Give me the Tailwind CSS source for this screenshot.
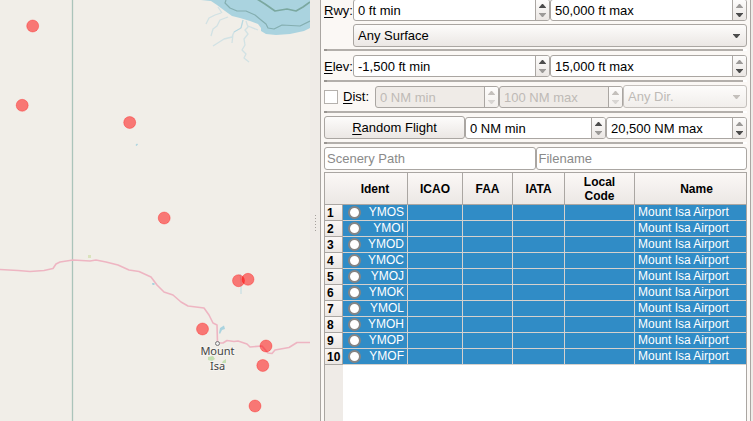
<!DOCTYPE html>
<html lang="en">
<head>
<meta charset="utf-8">
<title>Airports</title>
<script src="https://cdn.jsdelivr.net/npm/@tailwindcss/browser@4"></script>
</head>
<body class="bg-[#efebe7] font-['Liberation_Sans',Arial,sans-serif] text-[13px] leading-4 text-black">
<svg class="hidden" aria-hidden="true">
  <symbol id="up" viewBox="0 0 7 4"><path d="M0 4V3.500L3 0h1L7 3.500V4z" fill="currentColor"/></symbol>
  <symbol id="down" viewBox="0 0 7 4"><path d="M0 0h7v.5L4 4H3L0 .5z" fill="currentColor"/></symbol>
</svg>
<div class="flex h-screen overflow-hidden">
  <main class="min-w-0 flex-1 bg-[#f1eee8]">
    <svg class="block h-full w-full" viewBox="0 0 310 421" preserveAspectRatio="xMinYMin slice" role="img" aria-label="Map around Mount Isa">
      <rect width="310" height="421" fill="#f1eee8"/>
      <!-- sea and coast -->
      <path d="M201 0L211 1L217 5L225 11L232 16L240 18L250 21L258 24L261 28V31L266 34L276 35L290 34L304 31L310 28V0z" fill="#aad3df"/>
      <g fill="none" stroke-linejoin="round">
        <path d="M226 0L225 3L230 8L237 11L246 11L255 15L261 20L266 24L268 28L274 29L278 27L282 25L300 26L310 21" stroke="#84aeb0" stroke-width="1.2"/>
        <path d="M257 -1L265 4L275 11L287 9L296 11L303 7L310 2" stroke="#7ba8a0" stroke-width="1.7"/>
        <path d="M243 20L241 28L234 32L232 37L224 39L213 46M233 34L232 43M246 21L248 27L245 30L248 34L244 39L245 45L242 50L246 54L244 58L249 62M228 17L220 20L217 26L213 29L211 36M221 13L215 15L209 18L206 24M218 7L222 13M248 26L258 30" stroke="#aad3df" stroke-width="1.3" opacity=".45"/>
        <path d="M243 20L241 28L234 32M240 274L241 282V286L241 294" stroke="#aad3df" opacity=".7"/>
        <path d="M72.500 0V421" stroke="#abc4ba" stroke-width="1.3"/>
        <!-- highway -->
        <path d="M0 269.500L18 270.500L30 271.500L44 270.500L53 268.500L56 264L60 262L73 260L90 261L96 260L106 262L118 265L129 270L139 271.500L151 277L157 285L164 292L173 295L181 302L188 306L204 308L209 315L213 323L217 325L217.500 343L223 343L227 340.500L234 341.500L238 341L247 344L250 347L262 346L268 353L272 353.500L275 350L289 347.500L297 342.500L310 342.500" stroke="#eeb5c2" stroke-width="1.6"/>
      </g>
      <path d="M219 333L220 328L224 325.500L225 329L222 330L220 334z" fill="#aad3df"/>
      <path d="M135.500 145L137 143.500L138 144.500L136.500 146zM152 283h2.500v2h-2z" fill="#aad3df"/>
      <path d="M208 357l5-1 2 3-3 2-4-1zM223 361l3-2v4h-4z" fill="#c3dfb1"/>
      <path d="M88 255h3v3h-3z" fill="#dbe3bd"/>
      <circle cx="217.500" cy="343.500" r="2" fill="#eee" stroke="#777"/>
      <g class="font-['Noto_Sans',sans-serif] text-[11px]" text-anchor="middle" fill="#444" stroke="#f6f4ef" stroke-width="2" paint-order="stroke">
        <text x="217.500" y="355">Mount</text>
        <text x="217.500" y="370">Isa</text>
      </g>
      <g fill="#ff0000" fill-opacity=".5" stroke="#ff0000" stroke-opacity=".3">
        <circle cx="32.700" cy="26" r="6"/><circle cx="22.200" cy="105.300" r="6"/><circle cx="129.700" cy="122.500" r="6"/>
        <circle cx="164.200" cy="218" r="6"/><circle cx="238.500" cy="280.700" r="6"/><circle cx="248" cy="279.300" r="6"/>
        <circle cx="202.500" cy="329" r="6"/><circle cx="266" cy="346" r="6"/><circle cx="262.800" cy="365.500" r="6"/><circle cx="255" cy="406" r="6"/>
      </g>
    </svg>
  </main>

  <div class="flex w-[10px] shrink-0 items-center justify-center pt-[26px]">
    <div class="h-[17px] w-px bg-[repeating-linear-gradient(#a5a19d_0_1px,transparent_1px_3px)]"></div>
  </div>

  <aside class="mr-[2px] flex w-[431px] shrink-0 flex-col border-x border-[#aaa6a2] bg-[#fbf8f5] px-[3px]">
    <form class="-mt-[2px] flex flex-col gap-[3px]">
      <div class="flex h-[23px] items-end">
        <label for="rmin" class="w-[29px] pb-[2px]"><span class="underline underline-offset-2">R</span>wy:</label>
        <div class="grid flex-1 grid-cols-2">
          <div class="flex h-[22px] overflow-hidden rounded-[3px] border border-[#aaa6a2] bg-white">
            <input id="rmin" value="0 ft min" class="min-w-0 flex-1 px-1 pt-px outline-none">
            <div class="flex w-[14px] flex-col items-center justify-center gap-[5px] border-l border-[#aaa6a2] bg-linear-to-b from-[#fdfcfb] to-[#ebe7e4]">
              <button type="button" aria-label="Increase" class="text-[#4c4c4c]"><svg class="block h-1 w-[7px]"><use href="#up"/></svg></button>
              <button type="button" aria-label="Decrease" class="text-[#9c9a98]"><svg class="block h-1 w-[7px]"><use href="#down"/></svg></button>
            </div>
          </div>
          <div class="flex h-[22px] overflow-hidden rounded-[3px] border border-[#aaa6a2] bg-white">
            <input aria-label="Maximum runway" value="50,000 ft max" class="min-w-0 flex-1 px-1 pt-px outline-none">
            <div class="flex w-[14px] flex-col items-center justify-center gap-[5px] border-l border-[#aaa6a2] bg-linear-to-b from-[#fdfcfb] to-[#ebe7e4]">
              <button type="button" aria-label="Increase" class="text-[#9c9a98]"><svg class="block h-1 w-[7px]"><use href="#up"/></svg></button>
              <button type="button" aria-label="Decrease" class="text-[#4c4c4c]"><svg class="block h-1 w-[7px]"><use href="#down"/></svg></button>
            </div>
          </div>
        </div>
      </div>
      <div class="relative -mb-px ml-[29px] h-[23px]">
        <select aria-label="Surface" class="block h-full w-full appearance-none rounded-[3px] border border-[#aaa6a2] bg-linear-to-b from-[#fdfcfb] to-[#ebe7e4] px-1"><option>Any Surface</option></select>
        <svg class="pointer-events-none absolute top-[10px] right-[7px] h-1 w-[7px] text-[#4c4c4c]"><use href="#down"/></svg>
      </div>
      <hr class="relative h-[2px] border-0 border-r-4 border-white bg-[#b3afab] before:absolute before:top-0 before:left-0 before:size-[3px] before:bg-[#999591]">
      <div class="flex h-[23px] items-end">
        <label for="emin" class="w-[29px] pb-[2px]"><span class="underline underline-offset-2">E</span>lev:</label>
        <div class="grid flex-1 grid-cols-2">
          <div class="flex h-[22px] overflow-hidden rounded-[3px] border border-[#aaa6a2] bg-white">
            <input id="emin" value="-1,500 ft min" class="min-w-0 flex-1 px-1 pt-px outline-none">
            <div class="flex w-[14px] flex-col items-center justify-center gap-[5px] border-l border-[#aaa6a2] bg-linear-to-b from-[#fdfcfb] to-[#ebe7e4]">
              <button type="button" aria-label="Increase" class="text-[#4c4c4c]"><svg class="block h-1 w-[7px]"><use href="#up"/></svg></button>
              <button type="button" aria-label="Decrease" class="text-[#9c9a98]"><svg class="block h-1 w-[7px]"><use href="#down"/></svg></button>
            </div>
          </div>
          <div class="flex h-[22px] overflow-hidden rounded-[3px] border border-[#aaa6a2] bg-white">
            <input aria-label="Maximum elevation" value="15,000 ft max" class="min-w-0 flex-1 px-1 pt-px outline-none">
            <div class="flex w-[14px] flex-col items-center justify-center gap-[5px] border-l border-[#aaa6a2] bg-linear-to-b from-[#fdfcfb] to-[#ebe7e4]">
              <button type="button" aria-label="Increase" class="text-[#9c9a98]"><svg class="block h-1 w-[7px]"><use href="#up"/></svg></button>
              <button type="button" aria-label="Decrease" class="text-[#4c4c4c]"><svg class="block h-1 w-[7px]"><use href="#down"/></svg></button>
            </div>
          </div>
        </div>
      </div>
      <hr class="relative h-[2px] border-0 border-r-4 border-white bg-[#b3afab] before:absolute before:top-0 before:left-0 before:size-[3px] before:bg-[#999591]">
      <div class="flex h-[23px] items-end">
        <div class="flex w-[51px] items-center gap-[5px] pb-[3px]">
          <input id="dist" type="checkbox" class="size-[14px] appearance-none border border-[#b5b1ad] bg-white checked:bg-[#308cc6]">
          <label for="dist"><span class="underline underline-offset-2">D</span>ist:</label>
        </div>
        <div class="grid flex-1 grid-cols-3 items-end text-[#bebab6]">
          <div class="flex h-[22px] overflow-hidden rounded-[3px] border border-[#aaa6a2] bg-[#efebe7]">
            <input aria-label="Minimum distance" disabled value="0 NM min" class="min-w-0 flex-1 px-1 pt-px">
            <div class="flex w-[14px] flex-col items-center justify-center gap-[5px] border-l border-[#aaa6a2] bg-linear-to-b from-[#fdfcfb] to-[#f3f0ed]">
              <button type="button" disabled aria-label="Increase" class="text-[#c4c0bc]"><svg class="block h-1 w-[7px]"><use href="#up"/></svg></button>
              <button type="button" disabled aria-label="Decrease" class="text-[#d8d5d2]"><svg class="block h-1 w-[7px]"><use href="#down"/></svg></button>
            </div>
          </div>
          <div class="flex h-[22px] overflow-hidden rounded-[3px] border border-[#aaa6a2] bg-[#efebe7]">
            <input aria-label="Maximum distance" disabled value="100 NM max" class="min-w-0 flex-1 px-1 pt-px">
            <div class="flex w-[14px] flex-col items-center justify-center gap-[5px] border-l border-[#aaa6a2] bg-linear-to-b from-[#fdfcfb] to-[#f3f0ed]">
              <button type="button" disabled aria-label="Increase" class="text-[#c4c0bc]"><svg class="block h-1 w-[7px]"><use href="#up"/></svg></button>
              <button type="button" disabled aria-label="Decrease" class="text-[#d8d5d2]"><svg class="block h-1 w-[7px]"><use href="#down"/></svg></button>
            </div>
          </div>
          <div class="relative h-[23px]">
            <select aria-label="Direction" disabled class="block h-full w-full appearance-none rounded-[3px] border border-[#c4c0bc] bg-linear-to-b from-[#fdfcfb] to-[#f1eeeb] px-1 text-[#bebab6] opacity-100"><option>Any Dir.</option></select>
            <svg class="pointer-events-none absolute top-[10px] right-[7px] h-1 w-[7px] text-[#c4c0bc]"><use href="#down"/></svg>
          </div>
        </div>
      </div>
      <hr class="relative h-[2px] border-0 border-r-4 border-white bg-[#b3afab] before:absolute before:top-0 before:left-0 before:size-[3px] before:bg-[#999591]">
      <div class="grid h-[23px] grid-cols-3 items-end">
        <button type="button" class="h-[23px] rounded-[3px] border border-[#aaa6a2] bg-linear-to-b from-[#fdfcfb] to-[#ebe7e4]"><span class="underline underline-offset-2">R</span>andom Flight</button>
        <div class="flex h-[22px] overflow-hidden rounded-[3px] border border-[#aaa6a2] bg-white">
          <input aria-label="Minimum flight" value="0 NM min" class="min-w-0 flex-1 px-1 pt-px outline-none">
          <div class="flex w-[14px] flex-col items-center justify-center gap-[5px] border-l border-[#aaa6a2] bg-linear-to-b from-[#fdfcfb] to-[#ebe7e4]">
            <button type="button" aria-label="Increase" class="text-[#4c4c4c]"><svg class="block h-1 w-[7px]"><use href="#up"/></svg></button>
            <button type="button" aria-label="Decrease" class="text-[#9c9a98]"><svg class="block h-1 w-[7px]"><use href="#down"/></svg></button>
          </div>
        </div>
        <div class="flex h-[22px] overflow-hidden rounded-[3px] border border-[#aaa6a2] bg-white">
          <input aria-label="Maximum flight" value="20,500 NM max" class="min-w-0 flex-1 px-1 pt-px outline-none">
          <div class="flex w-[14px] flex-col items-center justify-center gap-[5px] border-l border-[#aaa6a2] bg-linear-to-b from-[#fdfcfb] to-[#ebe7e4]">
            <button type="button" aria-label="Increase" class="text-[#9c9a98]"><svg class="block h-1 w-[7px]"><use href="#up"/></svg></button>
            <button type="button" aria-label="Decrease" class="text-[#4c4c4c]"><svg class="block h-1 w-[7px]"><use href="#down"/></svg></button>
          </div>
        </div>
      </div>
      <hr class="relative h-[2px] border-0 border-r-4 border-white bg-[#b3afab] before:absolute before:top-0 before:left-0 before:size-[3px] before:bg-[#999591]">
      <div class="grid grid-cols-2">
        <input aria-label="Scenery Path" placeholder="Scenery Path" class="h-[23px] min-w-0 rounded-[3px] border border-[#aaa6a2] bg-white px-[2px] placeholder:text-[#8a8a8a]">
        <input aria-label="Filename" placeholder="Filename" class="h-[23px] min-w-0 rounded-[3px] border border-[#aaa6a2] bg-white px-[2px] placeholder:text-[#8a8a8a]">
      </div>
    </form>

    <div class="mt-[2px] flex-1 border border-b-0 border-[#aaa6a2] bg-[linear-gradient(90deg,#efebe7_18px,white_18px)] text-[12px]">
      <table class="w-full table-fixed border-separate border-spacing-0">
        <colgroup><col class="w-[18px]"><col class="w-[65px]"><col class="w-[55px]"><col class="w-[50px]"><col class="w-[52px]"><col class="w-[70px]"><col></colgroup>
        <thead>
          <tr class="h-8 bg-linear-to-b from-[#fbf8f6] to-[#ebe7e4] leading-[14px] *:border-b *:border-[#aaa6a2] *:py-0">
            <td></td><th class="border-r px-0">Ident</th><th class="border-r px-0">ICAO</th><th class="border-r px-0">FAA</th><th class="border-r px-0">IATA</th><th class="border-r px-0">Local<br>Code</th><th class="pr-0 pl-3">Name</th>
          </tr>
        </thead>
        <tbody id="rows"></tbody>
      </table>
    </div>
  </aside>
</div>
<script>
const cell = 'border-r border-b border-[#d5d1cd] bg-[#308cc6] p-0';
document.getElementById('rows').innerHTML = ['YMOS','YMOI','YMOD','YMOC','YMOJ','YMOK','YMOL','YMOH','YMOP','YMOF'].map((id, i) => `
<tr class="h-4 leading-[15px] text-white">
  <th class="border-r border-b border-[#aaa6a2] bg-linear-to-b from-[#fbf8f6] to-[#ebe7e4] p-0 pt-[2px] pl-[2px] text-left leading-[13px] text-black">${i + 1}</th>
  <td class="${cell}"><div class="flex items-center justify-between pr-[3px] pl-[5px]"><input type="radio" name="airport" aria-label="${id}" class="size-[13px] appearance-none rounded-full border-2 border-[#858585] bg-white">${id}</div></td>
  <td class="${cell}"></td><td class="${cell}"></td><td class="${cell}"></td><td class="${cell}"></td>
  <td class="border-b border-[#d5d1cd] bg-[#308cc6] p-0 pl-[3px] whitespace-nowrap">Mount Isa Airport</td>
</tr>`).join('');
</script>
</body>
</html>
